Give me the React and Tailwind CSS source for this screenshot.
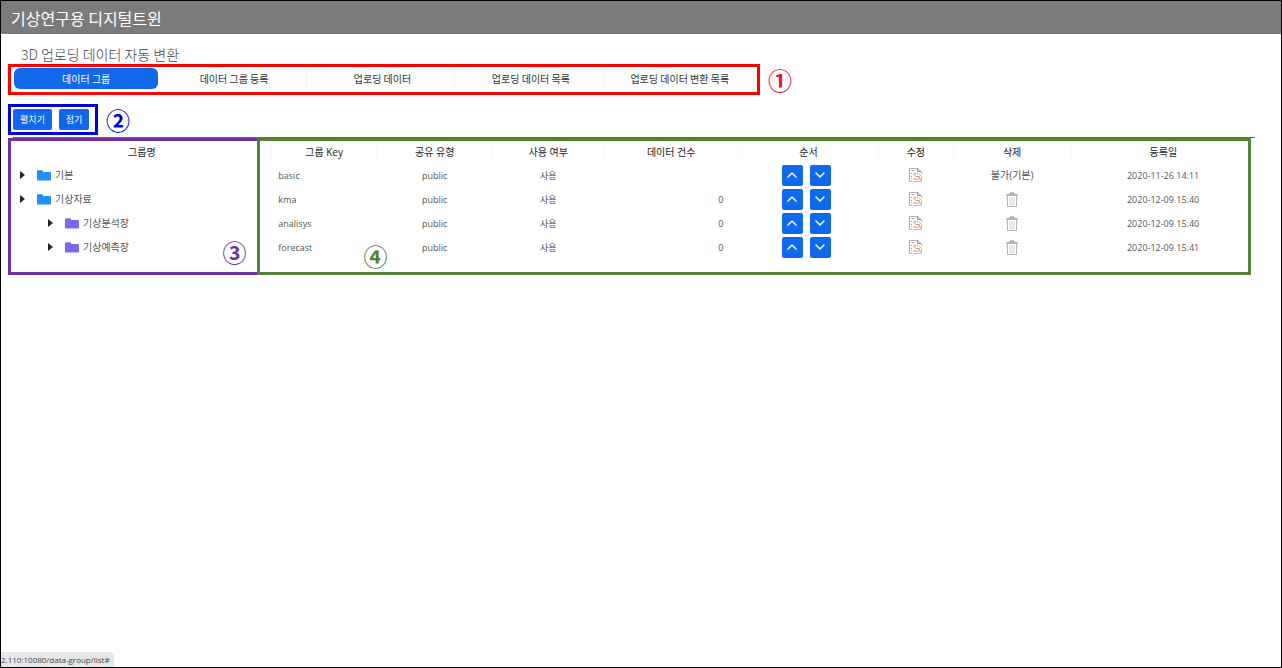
import { ChevronDown, ChevronUp } from 'lucide-react';

const tabs = ['데이터 그룹', '데이터 그룹 등록', '업로딩 데이터', '업로딩 데이터 목록', '업로딩 데이터 변환 목록'];

const columns = [
  { label: '그룹명', width: 'w-[20.8%]' },
  { label: '그룹 Key', width: 'w-[8.5%]' },
  { label: '공유 유형', width: 'w-[9.3%]' },
  { label: '사용 여부', width: 'w-[9%]' },
  { label: '데이터 건수', width: 'w-[10.8%]' },
  { label: '순서', width: 'w-[11.3%]' },
  { label: '수정', width: 'w-[6%]' },
  { label: '삭제', width: 'w-[9.5%]' },
  { label: '등록일', width: 'w-[14.8%]' },
];

const groups = [
  { key: 'basic', name: '기본', depth: 0, count: '', date: '2020-11-26 14:11', locked: true },
  { key: 'kma', name: '기상자료', depth: 0, count: '0', date: '2020-12-09 15:40' },
  { key: 'analisys', name: '기상분석장', depth: 1, count: '0', date: '2020-12-09 15:40' },
  { key: 'forecast', name: '기상예측장', depth: 1, count: '0', date: '2020-12-09 15:41' },
];

function FolderIcon({ className }) {
  return (
    <svg viewBox="0 0 14 11" className={`h-[11px] w-[14px] ${className}`} fill="currentColor" aria-hidden="true">
      <path d="M0 1.2Q0 .3.9.3h4.2l1.6 1.6h6.4q.9 0 .9.9v6.9q0 .9-.9.9H.9q-.9 0-.9-.9z" />
    </svg>
  );
}

function EditIcon() {
  return (
    <svg viewBox="0 0 15 16" className="h-4 w-[15px]" fill="none" aria-hidden="true">
      <path d="M4 14.5H1.5v-13H9L13.5 5v2" stroke="#b0b0b0" />
      <path d="M9.5 1.5v3h4" stroke="#8f8f8f" />
      <path d="M3.500 3.500h3M3 6.500h1M3 9.500h1M3 12h1" stroke="#aaa39f" />
      <path d="M5.500 6.500h5l3 3v5h-8" stroke="#e8b290" />
      <path d="M5 7l3 2.500h3.500M5 12h6M10.500 9l2 4" stroke="#df9568" />
    </svg>
  );
}

function TrashIcon() {
  return (
    <svg viewBox="0 0 12 15" className="h-[15px] w-3" fill="none" stroke="#b4b4b4" aria-hidden="true">
      <path d="M4.500 2V1h3v1" stroke="#777" />
      <path d="M.5 3.500v-1h11v1z" />
      <path d="M1.500 4v10.500h9V4" />
      <path d="M4 5.500v7.500M6 5.500v7.500M8 5.500v7.500" stroke="#bbb" strokeWidth=".7" />
    </svg>
  );
}

function OrderButton({ label, children }) {
  return (
    <button
      type="button"
      aria-label={label}
      className="flex h-[21px] w-[21px] items-center justify-center rounded-[2px] bg-[#0f69ea] text-white"
    >
      {children}
    </button>
  );
}

function GroupRow({ group }) {
  const child = group.depth > 0;
  return (
    <tr className="h-6">
      <td className={child ? 'pl-[35px]' : 'pl-[7px]'}>
        <div className="flex items-center text-[10px]">
          <button
            type="button"
            aria-label={`${group.name} 펼치기`}
            className="h-0 w-0 border-y-[4px] border-l-[5px] border-y-transparent border-l-[#222]"
          />
          <FolderIcon className={child ? 'ml-3 text-[#7b68ee]' : 'ml-3 text-[#1e90ff]'} />
          <span className="ml-1">{group.name}</span>
        </div>
      </td>
      <td className="pt-px pl-[7px] text-left">{group.key}</td>
      <td className="pt-px">public</td>
      <td className="pt-px">사용</td>
      <td className="pt-px pr-[15px] text-right">{group.count}</td>
      <td>
        <div className="flex justify-center gap-[7px] pr-1">
          <OrderButton label="위로">
            <ChevronUp size={16} />
          </OrderButton>
          <OrderButton label="아래로">
            <ChevronDown size={16} />
          </OrderButton>
        </div>
      </td>
      <td>
        <a href="#" aria-label="수정" className="flex justify-center">
          <EditIcon />
        </a>
      </td>
      <td>
        {group.locked ? (
          <span className="text-[10px]">불가(기본)</span>
        ) : (
          <a href="#" aria-label="삭제" className="flex justify-center">
            <TrashIcon />
          </a>
        )}
      </td>
      <td className="pt-px">{group.date}</td>
    </tr>
  );
}

export default function App() {
  return (
    <div className="relative min-h-screen border border-black bg-white font-['Noto_Sans_CJK_KR',sans-serif] text-[#555]">
      <header className="flex h-[33px] items-center bg-[#7b7b7b] px-2.5">
        <h1 className="text-base leading-6 text-white">기상연구용 디지털트윈</h1>
      </header>

      <main className="pr-[30px] pl-[7px]">
        <h2 className="pt-2.5 pl-[13px] text-sm leading-5 font-light text-[#444]">3D 업로딩 데이터 자동 변환</h2>

        <div className="flex items-center gap-2">
          <nav className="grid h-[31px] w-full max-w-[752px] grid-cols-5 border-[3px] border-[#f00] bg-[#fcfefe] pt-px pr-px pl-[3px]">
            {tabs.map((tab, i) => (
              <a
                key={tab}
                href="#"
                className={
                  i === 0
                    ? 'mr-1 flex h-[21px] items-center justify-center rounded-md bg-[#0f69ea] text-[10px] text-white'
                    : 'mr-1 flex h-[21px] items-center justify-center border-r border-[#f3f5f5] text-[10px] text-[#333] last:border-r-0'
                }
              >
                {tab}
              </a>
            ))}
          </nav>
          <span className="text-2xl leading-6 font-bold text-[#e8102a]">①</span>
        </div>

        <div className="mt-[9px] flex items-center gap-2">
          <div className="flex h-[31px] gap-[7px] border-[3px] border-[#00d] px-[2px] pt-[2px] pr-1.5">
            <button type="button" className="h-[21px] w-[39px] rounded-[2px] bg-[#0f69ea] text-[9px] text-white">
              펼치기
            </button>
            <button type="button" className="h-[21px] w-[30px] rounded-[2px] bg-[#0f69ea] text-[9px] text-white">
              접기
            </button>
          </div>
          <span className="text-2xl leading-6 font-bold text-[#00c]">②</span>
        </div>

        <section className="relative mt-[2px] h-[138px]">
          <div className="-mr-1 ml-[5px] border-t border-[#4a6e9c]">
            <table className="w-full table-fixed text-center font-['Open_Sans','Noto_Sans_CJK_KR',sans-serif] text-[9px] leading-4">
              <thead>
                <tr className="h-[25px] text-[10px] text-[#222]">
                  {columns.map((col) => (
                    <th key={col.label} className={`${col.width} border-r border-[#f8f8f8] pt-[2px] font-normal last:border-r-0`}>
                      {col.label}
                    </th>
                  ))}
                </tr>
              </thead>
              <tbody>
                {groups.map((group) => (
                  <GroupRow key={group.key} group={group} />
                ))}
              </tbody>
            </table>
          </div>

          {/* area frames */}
          <div className="pointer-events-none absolute inset-x-0 top-px bottom-0 flex">
            <div className="relative w-1/5 border-[3px] border-r-0 border-[#7030a0]">
              <span className="absolute right-2.5 bottom-2 text-2xl leading-6 font-bold text-[#6d35a0]">③</span>
            </div>
            <div className="relative grow border-[3px] border-[#548235]">
              <span className="absolute bottom-1 left-[104px] text-2xl leading-6 font-bold text-[#548235]">④</span>
            </div>
          </div>
        </section>
      </main>

      <div className="absolute bottom-0 left-0 h-[15px] rounded-tr-sm bg-[#e6e7ea] pr-1 font-['Open_Sans',sans-serif] text-[8px] leading-[15px] text-[#444]">
        2.110:10080/data-group/list#
      </div>
    </div>
  );
}
